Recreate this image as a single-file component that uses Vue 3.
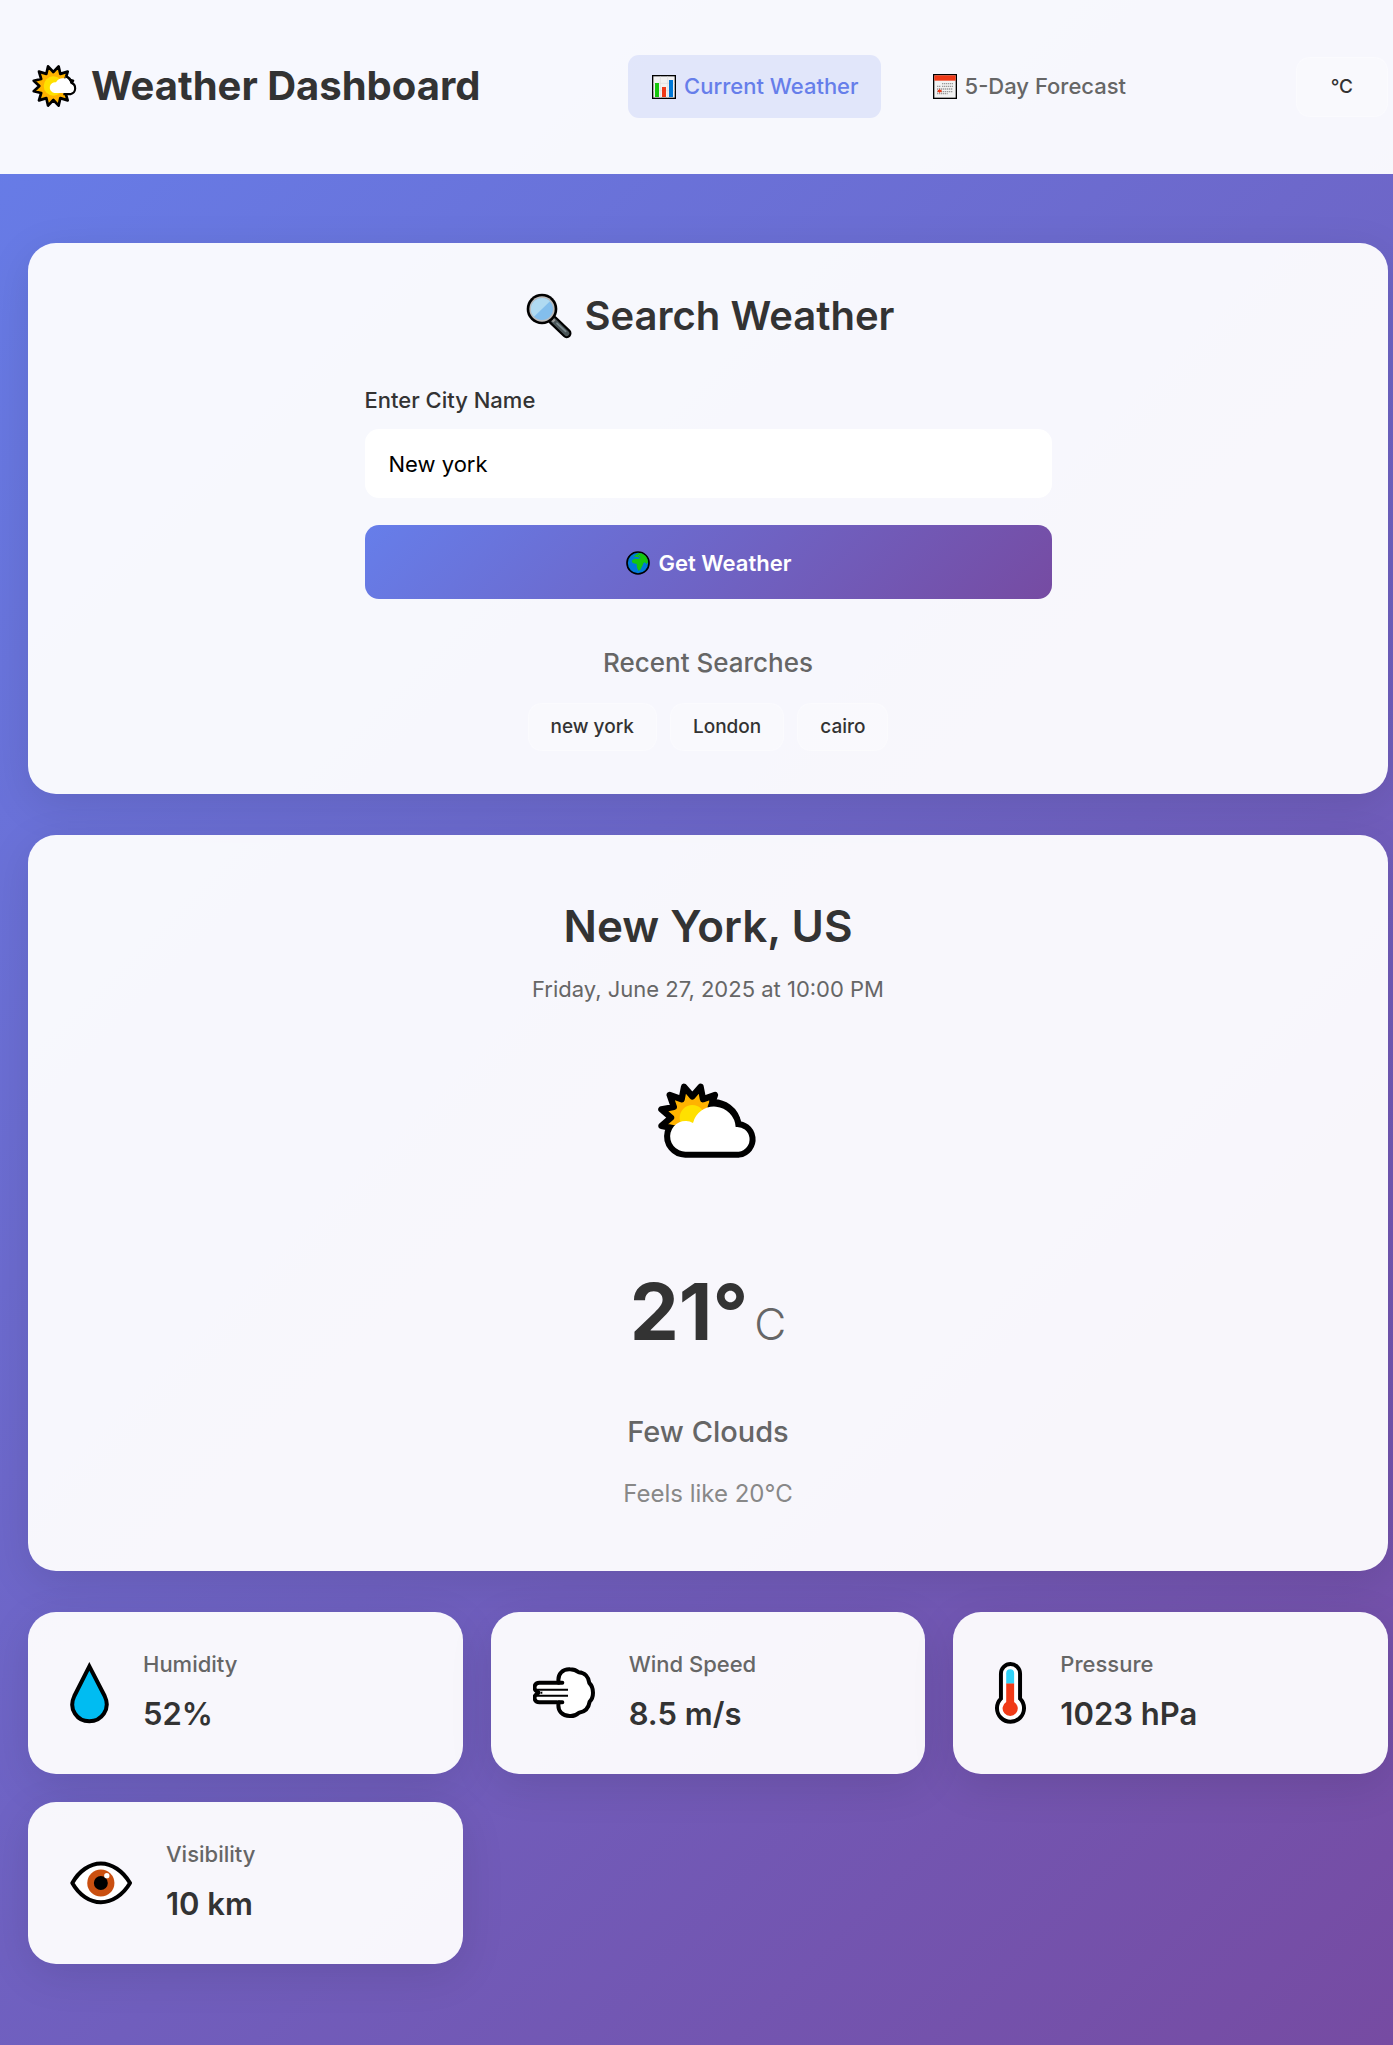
<script setup>
import { ref } from 'vue'

const city = ref('New york')
const unit = ref('C')
const recent = ['new york', 'London', 'cairo']
const details = [
  { id: 'humidity', label: 'Humidity', value: '52%' },
  { id: 'wind', label: 'Wind Speed', value: '8.5 m/s' },
  { id: 'pressure', label: 'Pressure', value: '1023 hPa' },
  { id: 'visibility', label: 'Visibility', value: '10 km' }
]

// Twelve-pointed sun outline around (cx, cy)
function sunRays(cx, cy, outer, inner) {
  const points = []
  for (let i = 0; i < 24; i++) {
    const angle = ((15 + i * 15) * Math.PI) / 180
    const r = i % 2 === 0 ? outer : inner
    points.push(`${(cx + r * Math.cos(angle)).toFixed(1)},${(cy + r * Math.sin(angle)).toFixed(1)}`)
  }
  return points.join(' ')
}
const smallSun = sunRays(160, 168, 61, 42)
const largeSun = sunRays(576, 712, 96, 64)
</script>

<template>
  <div class="page">
    <header class="header">
      <h1 class="brand">
        <svg width="50" height="46" viewBox="84 99 150 138" aria-hidden="true">
          <polygon :points="smallSun" fill="#ffb300" stroke="#000" stroke-width="8" stroke-linejoin="round" />
          <circle cx="160" cy="168" r="29" fill="#ffe000" />
          <path d="M197 139A27 27 0 0 1 214 158A18 18 0 0 1 211 192H190" fill="#fff" stroke="#000" stroke-width="8" />
          <path d="M163 189A16 16 0 1 1 168 157A24 24 0 0 1 212 162A14 14 0 0 1 212 189Z" fill="#fff" />
        </svg>
        Weather Dashboard
      </h1>
      <nav class="nav">
        <a href="#current" class="tab active">
          <svg width="24" height="24" viewBox="0 0 72 72" aria-hidden="true">
            <rect x="2" y="2" width="68" height="68" fill="#f2f2f2" stroke="#000" stroke-width="4" />
            <path d="M25 4V68M47 4V68M4 25H68M4 47H68" stroke="#ddd" stroke-width="2" />
            <path d="M9 24H21V66H9Z" fill="#16c60c" />
            <path d="M30 36H42V66H30Z" fill="#f03a17" />
            <path d="M51 15H63V66H51Z" fill="#0078d7" />
          </svg>
          Current Weather
        </a>
        <a href="#forecast" class="tab">
          <svg width="24" height="25" viewBox="0 0 72 75" aria-hidden="true">
            <rect x="2" y="2" width="68" height="71" fill="#f2f2f2" stroke="#000" stroke-width="4" />
            <path d="M4 4H68V20H4Z" fill="#f03a17" />
            <path d="M27 29H60M27 37H60M12 37H24M12 45H60M12 53H60M12 59H44" stroke="#999" stroke-width="4" stroke-dasharray="4 2" />
            <path d="M20 43L22 48L27 47L25 51L27 55L22 54L20 58L18 54L13 55L15 51L13 47L18 48Z" fill="#f03a17" />
          </svg>
          5-Day Forecast
        </a>
      </nav>
      <button type="button" class="unit" @click="unit = unit === 'C' ? 'F' : 'C'">°{{ unit }}</button>
    </header>

    <main class="main">
      <section class="card search">
        <h2 class="search-title">
          <svg width="50" height="46" viewBox="67 69 150 138" aria-hidden="true">
            <path d="M160 151L201 190" stroke="#000" stroke-width="29" stroke-linecap="round" />
            <path d="M158 148L201 190" stroke="#4a5558" stroke-width="16" stroke-linecap="round" />
            <path d="M154 144L164 154" stroke="#999" stroke-width="10" />
            <path d="M172 160L198 184" stroke="#7b8a8f" stroke-width="5" stroke-linecap="round" />
            <circle cx="127" cy="117" r="46" fill="#000" />
            <circle cx="127" cy="117" r="38" fill="#bbb" />
            <circle cx="127" cy="117" r="33" fill="#83beec" />
            <path d="M103 140A33 33 0 0 1 151 94Z" fill="#b0daf1" />
          </svg>
          Search Weather
        </h2>
        <form class="form" @submit.prevent>
          <label for="city" class="label">Enter City Name</label>
          <input id="city" v-model="city" type="text" class="input" />
          <button type="submit" class="submit">
            <svg width="26" height="24" viewBox="-6 0 78 72" aria-hidden="true">
              <circle cx="36" cy="36" r="33" fill="#0078d7" stroke="#000" stroke-width="5" />
              <path d="M39 6C54 7 65 18 66 33L62 39L56 34L52 37C51 44 46 48 45 54L38 60L33 50L32 39L20 36L17 29L25 23L35 24L44 22L36 18L23 17L30 11Z" fill="#16c60c" />
              <path d="M20 20L33 20M37 13L43 18" stroke="#0078d7" stroke-width="3" />
            </svg>
            Get Weather
          </button>
        </form>
        <h3 class="recent-title">Recent Searches</h3>
        <div class="chips">
          <button v-for="name in recent" :key="name" type="button" class="chip" @click="city = name">{{ name }}</button>
        </div>
      </section>

      <section class="card current">
        <h2 class="city">New York, US</h2>
        <p class="date">Friday, June 27, 2025 at 10:00 PM</p>
        <svg class="condition-icon" width="100" height="76" viewBox="473 608 300 228" aria-hidden="true">
          <path d="M557 814A46 46 0 1 1 578 728A65 65 0 0 1 706 740A37 37 0 1 1 715 814Z" stroke="#000" stroke-width="36" />
          <polygon :points="largeSun" fill="#ffb300" stroke="#000" stroke-width="19" stroke-linejoin="round" />
          <circle cx="576" cy="712" r="38" fill="#ffe000" />
          <path d="M628 667A74 74 0 0 1 714 731" fill="none" stroke="#000" stroke-width="18" />
          <path d="M557 814A46 46 0 1 1 578 728A65 65 0 0 1 706 740A37 37 0 1 1 715 814Z" fill="#fff" />
        </svg>
        <p class="temperature">21°<span class="degree-unit">C</span></p>
        <p class="condition">Few Clouds</p>
        <p class="feels">Feels like 20°C</p>
      </section>

      <section class="details">
        <article v-for="item in details" :key="item.id" class="card detail">
          <svg v-if="item.id === 'humidity'" width="39" height="62" viewBox="0 0 117 186" aria-hidden="true">
            <path d="M58 13L13 102C-6 142 22 178 58 178S123 142 104 102Z" fill="#00bcf2" stroke="#000" stroke-width="12" />
          </svg>
          <svg v-else-if="item.id === 'wind'" width="62" height="52" viewBox="156 201 186 156" aria-hidden="true">
            <path d="M233 248C228 220 247 207 267 208C279 208 287 212 293 217C312 218 323 232 325 249C333 257 336 266 336 278C336 288 333 298 326 305C323 324 311 336 294 338C286 345 277 349 266 348C246 348 228 335 233 307H175C160 307 157 291 165 284L173 278L165 272C157 265 160 248 175 248Z" fill="#fff" stroke="#000" stroke-width="12" stroke-linejoin="round" />
            <path d="M228 255H250V301H228Z" fill="#fff" />
            <path d="M233 248H244M233 307H244" stroke="#000" stroke-width="12" stroke-linecap="round" />
            <path d="M168 269H261M168 287H261M180 278H186" stroke="#000" stroke-width="6" />
            <path d="M184 278H250" stroke="#fff" stroke-width="8" />
          </svg>
          <svg v-else-if="item.id === 'pressure'" width="31" height="62" viewBox="164 184 94 188" aria-hidden="true">
            <path d="M182 295V219A29 29 0 0 1 240 219V295A41 41 0 1 1 182 295Z" fill="#fff" stroke="#000" stroke-width="12" />
            <path d="M198 250V218A12 12 0 0 1 222 218V250Z" fill="#31d2f7" />
            <path d="M198 249H222V305A23 23 0 1 1 198 305Z" fill="#f03a17" />
          </svg>
          <svg v-else width="62" height="44" viewBox="209 242 187 132" aria-hidden="true">
            <path d="M216 308C236 272 269 249 302 249S369 272 390 308C369 344 335 366 302 366S236 344 216 308Z" fill="#fff" stroke="#000" stroke-width="12" stroke-linejoin="round" />
            <circle cx="302" cy="308" r="41" fill="#ca5010" />
            <circle cx="302" cy="308" r="21" />
            <circle cx="320" cy="286" r="8" fill="#fff" />
          </svg>
          <div>
            <h3 class="detail-label">{{ item.label }}</h3>
            <p class="detail-value">{{ item.value }}</p>
          </div>
        </article>
      </section>
    </main>
  </div>
</template>

<style>
body {
  margin: 0;
}
</style>

<style scoped>
.page {
  min-height: 100vh;
  background: linear-gradient(135deg, #667eea 0%, #764ba2 100%);
  color: #333;
  font-family: Inter, "Liberation Sans", sans-serif;
  font-size: 22px;
  line-height: 35px;
}
.page *,
.page {
  box-sizing: border-box;
}
h1,
h2,
h3,
p {
  margin: 0;
}
svg {
  flex: none;
}
button,
input {
  border: 0;
  font-family: inherit;
}
button {
  cursor: pointer;
}
.header {
  display: flex;
  align-items: center;
  justify-content: space-between;
  padding: 55px 5px 56px 28px;
  background: rgba(255, 255, 255, 0.95);
}
.brand {
  display: flex;
  align-items: center;
  gap: 13px;
  padding-bottom: 2px;
  font-size: 40px;
  font-weight: 700;
}
.nav {
  display: flex;
  gap: 28px;
}
.tab {
  display: flex;
  align-items: center;
  gap: 8px;
  padding: 14px 22px 14px 24px;
  border-radius: 11px;
  color: #666;
  font-weight: 500;
  text-decoration: none;
}
.tab.active {
  background: rgba(102, 126, 234, 0.15);
  color: #667eea;
}
.unit,
.chip {
  border: 1px solid rgba(255, 255, 255, 0.3);
  border-radius: 14px;
  background: rgba(255, 255, 255, 0.25);
  color: #333;
  font-size: 19px;
  font-weight: 500;
  line-height: 24px;
}
.unit {
  padding: 17px 34px;
}
.main {
  display: flex;
  flex-direction: column;
  gap: 41px;
  padding: 69px 5px 82px 28px;
}
.card {
  border-radius: 28px;
  background: rgba(255, 255, 255, 0.95);
  box-shadow: 0 11px 44px rgba(0, 0, 0, 0.1);
}
.search {
  padding: 41px 42px 43px;
}
.search-title {
  display: flex;
  align-items: center;
  justify-content: center;
  gap: 13px;
  margin-bottom: 35px;
  font-size: 40px;
  font-weight: 600;
  line-height: 64px;
}
.form {
  display: flex;
  flex-direction: column;
  max-width: 687px;
  margin: 0 auto 43px;
}
.label {
  margin-bottom: 11px;
  font-weight: 500;
}
.input {
  height: 69px;
  margin-bottom: 27px;
  padding: 0 24px;
  border-radius: 14px;
  background: #fff;
  color: #000;
  font-size: 22px;
}
.submit {
  display: flex;
  align-items: center;
  justify-content: center;
  gap: 8px;
  height: 74px;
  padding-top: 2px;
  border-radius: 14px;
  background: linear-gradient(135deg, #667eea 0%, #764ba2 100%);
  color: #fff;
  font-size: 22px;
  font-weight: 600;
}
.recent-title {
  margin-bottom: 19px;
  color: #666;
  font-size: 26px;
  font-weight: 500;
  line-height: 42px;
  text-align: center;
}
.chips {
  display: flex;
  flex-wrap: wrap;
  justify-content: center;
  gap: 13px;
}
.chip {
  padding: 11px 22px;
}
.current {
  display: flex;
  flex-direction: column;
  align-items: center;
  padding: 56px 42px 58px;
}
.city {
  margin-bottom: 11px;
  font-size: 44px;
  font-weight: 600;
  line-height: 70px;
}
.date {
  color: #666;
}
.condition-icon {
  margin: 76px 0 114px;
}
.temperature {
  margin-bottom: 59px;
  font-size: 78px;
  font-optical-sizing: none;
  font-weight: 700;
  line-height: 77px;
}
.degree-unit {
  margin-left: 6px;
  color: #666;
  font-size: 44px;
  font-weight: 300;
  line-height: 44px;
}
.condition {
  margin-bottom: 20px;
  color: #666;
  font-size: 29px;
  font-weight: 500;
  line-height: 46px;
}
.feels {
  color: #888;
  font-size: 24px;
  line-height: 38px;
}
.details {
  display: grid;
  grid-template-columns: repeat(auto-fit, minmax(344px, 1fr));
  gap: 28px;
}
.detail {
  display: flex;
  align-items: center;
  gap: 34px;
  padding: 35px 42px;
}
.detail-label {
  margin-bottom: 7px;
  color: #666;
  font-size: 22px;
  font-weight: 500;
}
.detail-value {
  font-size: 31px;
  font-weight: 600;
  line-height: 50px;
}
</style>
